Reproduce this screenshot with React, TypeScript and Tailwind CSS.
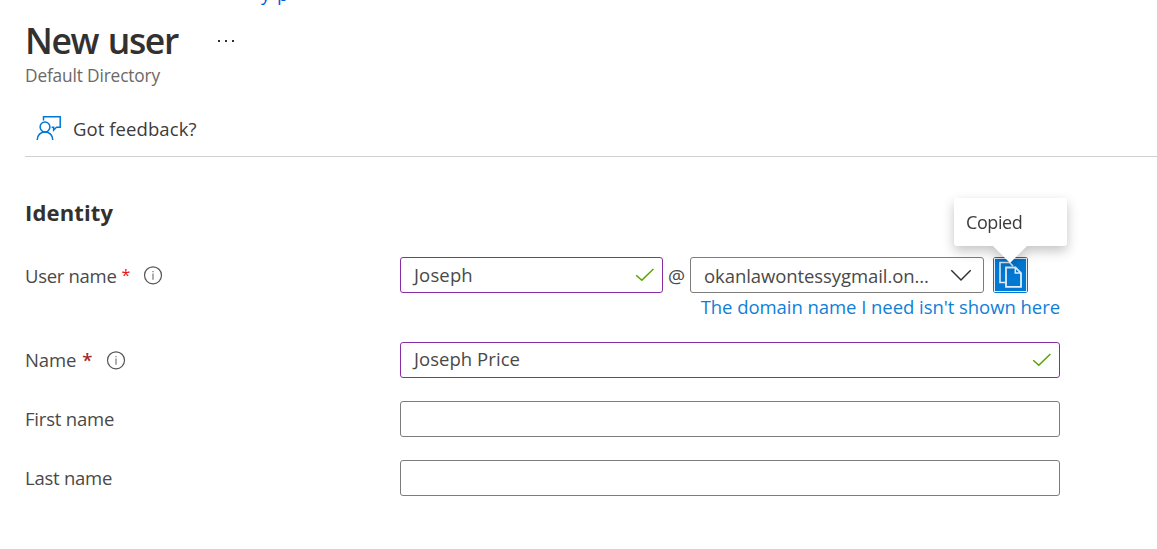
import React from "react";

function FeedbackIcon() {
  return (
    <svg width="26" height="26" viewBox="0 0 26 26" fill="none" stroke="#0078d4" strokeWidth="1.5" className="relative -top-px shrink-0">
      <path d="M7.5 5.5V1.7H24.2V12.3H20.5L17.6 15.2V12.3H15.6" />
      <circle cx="9" cy="12" r="4.9" />
      <path d="M1.2 25C1.2 20.2 4.6 16.9 9 16.9S16.8 20.2 16.8 25" />
    </svg>
  );
}

function InfoIcon() {
  return (
    <svg width="20" height="20" viewBox="0 0 20 20" fill="none" stroke="#555" className="shrink-0">
      <circle cx="10" cy="10.3" r="8.5" strokeWidth="1.2" />
      <path d="M10 8.6V14.8M10 5.9V7.3" stroke="#777" strokeWidth="1.2" />
    </svg>
  );
}

function CheckIcon() {
  return (
    <svg width="20" height="14" viewBox="0 0 20 14" fill="none" stroke="#57a300" strokeWidth="1.5" className="shrink-0">
      <path d="M1.2 7.2L6.8 12.2L18.4 1" />
    </svg>
  );
}

function CopyIcon() {
  return (
    <svg width="35" height="36" viewBox="0 0 35 36" fill="none" stroke="#e3eefa">
      <rect x="1.5" y="1.5" width="32" height="33" strokeWidth="1" />
      <path d="M12.5 25.5H7V5.5H16.5L20 9" strokeWidth="1.5" />
      <path d="M13 10.5H22.5L28 16V29.8H13Z" fill="#0078d4" strokeWidth="1.8" />
      <path d="M22.3 10.5V16H28" strokeWidth="1.5" />
    </svg>
  );
}

type FieldProps = { label: React.ReactNode; children?: React.ReactNode };

function Row({ label, children }: FieldProps) {
  return (
    <div className="flex h-9 items-center">
      <div className="flex h-full w-[375px] shrink-0 items-center">{label}</div>
      {children}
    </div>
  );
}

export default function App() {
  return (
    <main className="h-[549px] w-full overflow-hidden bg-white pl-[25px] font-['Open_Sans','Noto_Sans',sans-serif] text-[18.5px] leading-6 text-[#4a4948]">
      <div className="flex h-[18px] items-start overflow-hidden pl-[236px]">
        <span className="-mt-[18px] text-[18.5px] text-[#015cda] [word-spacing:2px]">y p</span>
      </div>
      <header className="flex h-[46px] items-center">
        <h1 className="w-[153px] whitespace-nowrap pb-[2px] text-[35.5px] font-semibold leading-[44px] tracking-[-1.4px] text-[#323130] [word-spacing:2px]">New user</h1>
        <svg width="18" height="4" viewBox="0 0 18 4" fill="#323130" className="ml-[39px]">
          <rect x="1" y="1" width="2" height="2" /><rect x="8" y="1" width="2" height="2" /><rect x="15" y="1" width="2" height="2" />
        </svg>
      </header>
      <p className="h-6 text-[17.3px] tracking-[-0.15px] text-[#6b6967]">Default Directory</p>
      <div className="flex h-[69px] items-center gap-[11px] border-b border-[#d2d0ce] pl-[11px] pt-[13px]">
        <FeedbackIcon />
        <span className="tracking-[0.08px] text-[#3c3b3a]">Got feedback?</span>
      </div>
      <h2 className="mt-[40px] h-[31px] text-[22px] font-bold leading-[30px] tracking-[0.15px] text-[#323130]">Identity</h2>
      <section className="mt-[29px] w-[1035px]">
        <Row label={<>
          <span className="pt-[2px] tracking-[-0.3px]">User name</span>
          <span className="ml-[5px] text-[16px] text-[#e81123]">*</span>
          <span className="ml-[13px]"><InfoIcon /></span>
        </>}>
          <div className="flex h-9 w-[263px] items-center justify-between rounded-[3px] border border-[#8a2da5] pl-[13px] pr-[7px]">
            <span className="tracking-[0.15px]">Joseph</span>
            <CheckIcon />
          </div>
          <span className="w-[27px] pt-[2px] text-center text-[19px]">@</span>
          <div className="flex h-9 w-[294px] items-center justify-between rounded-[3px] border border-[#7f7d7b] pl-[13px] pr-[11px]">
            <span className="pt-px tracking-[-0.08px]">okanlawontessygmail.on...</span>
            <svg width="22" height="13" viewBox="0 0 22 13" fill="none" stroke="#323130" strokeWidth="1.5"><path d="M1.3 1.3L11 11L20.7 1.3" /></svg>
          </div>
          <button className="relative ml-[9px] h-9 w-[35px] rounded-[3px] bg-[#0078d4]">
            <CopyIcon />
            <span className="absolute -left-[39px] -top-[59px] flex h-[65px] w-[113px] drop-shadow-[0_5px_6px_rgba(0,0,0,0.23)]">
              <span className="flex h-[48px] w-[113px] items-center rounded-[3px] bg-white pb-px pl-[12px] text-[18px] tracking-[-0.4px] text-[#3c3b3a]">Copied</span>
              <svg width="36" height="18" viewBox="0 0 36 18" className="absolute left-[38px] top-[47px]"><path d="M0 0H36L18 18Z" fill="#fff" /></svg>
            </span>
          </button>
        </Row>
        <div className="h-[49px] text-right leading-[28px] text-[#1080d7]"><span className="tracking-[-0.05px]">The domain name I need isn't shown here</span></div>
        <div className="flex flex-col gap-[23px]">
          <Row label={<>
            <span className="tracking-[-0.1px]">Name</span>
            <span className="ml-[6px] font-semibold text-[#a4262c]">*</span>
            <span className="ml-[14px]"><InfoIcon /></span>
          </>}>
            <div className="flex h-9 w-[660px] items-center justify-between rounded-[3px] border border-[#8a2da5] pl-[13px] pr-[7px]">
              <span className="pb-[2px] tracking-[0.05px]">Joseph Price</span>
              <CheckIcon />
            </div>
          </Row>
          <Row label={<span className="tracking-[-0.2px]">First name</span>}>
            <div className="h-9 w-[660px] rounded-[3px] border border-[#7f7d7b]" />
          </Row>
          <Row label={<span className="tracking-[-0.25px]">Last name</span>}>
            <div className="h-9 w-[660px] rounded-[3px] border border-[#7f7d7b]" />
          </Row>
        </div>
      </section>
    </main>
  );
}
